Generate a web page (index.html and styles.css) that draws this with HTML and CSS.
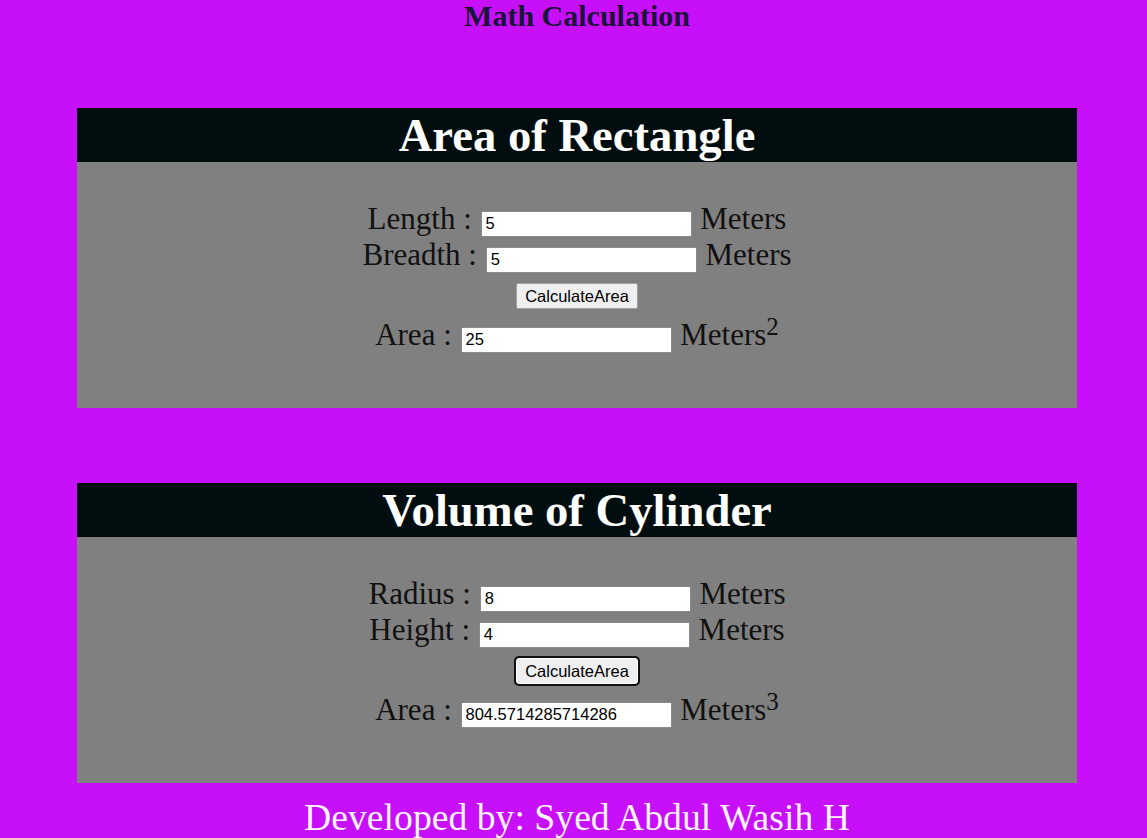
FILE: index.html
```html
<!DOCTYPE html>
<html>
<head>
<meta charset="utf-8">
<title>Math Calculation</title>
<link rel="stylesheet" href="styles.css">
</head>
<body>
<div class="page">
  <h2 class="page-title">Math Calculation</h2>

  <section class="card card-first">
    <h1 class="card-head">Area of Rectangle</h1>
    <div class="card-body">
      <div class="row">Length : <input class="field" type="text" value="5"> Meters</div>
      <div class="row">Breadth : <input class="field" type="text" value="5"> Meters</div>
      <div class="btn-row"><button class="btn">CalculateArea</button></div>
      <div class="row">Area : <input class="field" type="text" value="25"> Meters<sup class="pow">2</sup></div>
    </div>
  </section>

  <section class="card card-second">
    <h1 class="card-head">Volume of Cylinder</h1>
    <div class="card-body">
      <div class="row">Radius : <input class="field" type="text" value="8"> Meters</div>
      <div class="row">Height : <input class="field" type="text" value="4"> Meters</div>
      <div class="btn-row"><button class="btn btn-focus">CalculateArea</button></div>
      <div class="row">Area : <input class="field" type="text" value="804.5714285714286"> Meters<sup class="pow">3</sup></div>
    </div>
  </section>

  <footer class="footer">Developed by: Syed Abdul Wasih H</footer>
</div>
</body>
</html>
```

FILE: styles.css
```css
html, body {
  margin: 0;
  padding: 0;
}

body {
  background: #c80ff9;
  font-family: "Liberation Serif", "Times New Roman", serif;
  overflow: hidden;
}

.page {
  width: 1000px;
  margin-left: 77px;
}

.page-title {
  margin: 0;
  font-size: 30px;
  line-height: 32px;
  font-weight: bold;
  text-align: center;
  color: #1a1538;
}

.card {
  background: #808080;
  height: 300px;
}

.card-first {
  margin-top: 76px;
}

.card-second {
  margin-top: 75px;
}

.card-head {
  margin: 0;
  height: 54px;
  background: #010d0e;
  color: #ffffff;
  font-size: 46.67px;
  line-height: 54px;
  font-weight: bold;
  text-align: center;
}

.card-body {
  padding-top: 39px;
  text-align: center;
  color: #111111;
  font-size: 31px;
}

.row {
  line-height: 36px;
  height: 36px;
  white-space: nowrap;
}

.field {
  width: 211px;
  height: 26px;
  box-sizing: border-box;
  padding: 1px 4px;
  margin: 0 1px;
  border: 1px solid #8a8a8a;
  background: #ffffff;
  color: #000000;
  font-family: "Liberation Sans", Arial, sans-serif;
  font-size: 16.5px;
  vertical-align: baseline;
}

.btn-row {
  display: flex;
  justify-content: center;
  padding-top: 10px;
  padding-bottom: 8px;
}

.btn {
  width: 122px;
  height: 26px;
  box-sizing: border-box;
  margin: 0;
  padding: 0;
  background: #efefef;
  border: 1px solid #a0a0a0;
  border-radius: 2px;
  color: #000000;
  font-family: "Liberation Sans", Arial, sans-serif;
  font-size: 16.5px;
  line-height: 22px;
}

.btn-focus {
  border: 1px solid #ffffff;
  box-shadow: 0 0 0 2px #101010;
  border-radius: 3px;
}

.pow {
  font-size: 25px;
  line-height: 0;
  vertical-align: 10px;
}

.footer {
  margin-top: 12px;
  text-align: center;
  color: #fbf4ff;
  font-size: 37.7px;
  line-height: 44px;
  white-space: nowrap;
}
```
